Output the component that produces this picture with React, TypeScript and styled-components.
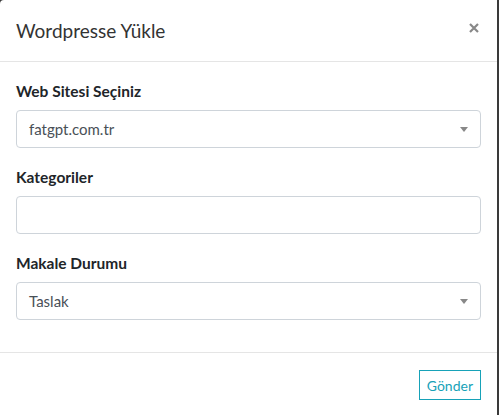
import styled, { createGlobalStyle } from 'styled-components';

const Global = createGlobalStyle`
  html, body {
    margin: 0;
    padding: 0;
    background: #3a3a3a;
    font-family: Lato, "Noto Sans", sans-serif;
  }
`;

const Page = styled.div`
  width: 499px;
  height: 415px;
  overflow: hidden;
  display: flex;
`;

const Modal = styled.div`
  width: 497px;
  height: 415px;
  background: #fff;
  border-radius: 4px 0 0 0;
  display: flex;
  flex-direction: column;
`;

const Header = styled.div`
  display: flex;
  align-items: center;
  justify-content: space-between;
  padding: 17px 16px 16px 16px;
  border-bottom: 1px solid #e5e5e5;
`;

const Title = styled.h4`
  margin: 0;
  font-size: 19px;
  line-height: 28px;
  font-weight: 400;
  color: #333;
`;

const Close = styled.button`
  border: 0;
  background: none;
  padding: 0;
  margin: 0 1px 6px 0;
  width: 12px;
  height: 12px;
  display: flex;
  align-items: center;
  justify-content: center;
  cursor: pointer;
`;

const Body = styled.div`
  padding: 17px 16px 15px;
  border-bottom: 1px solid #e5e5e5;
`;

const Group = styled.div`
  margin-bottom: 17px;
`;

const Label = styled.label`
  display: block;
  font-size: 15.5px;
  line-height: 24px;
  font-weight: 700;
  color: #212529;
  margin-bottom: 7px;
`;

const Field = styled.div`
  position: relative;
  height: 38px;
  box-sizing: border-box;
  border: 1px solid #ced4da;
  border-radius: 4px;
  display: flex;
  align-items: center;
  padding: 0 12px;
  font-size: 15px;
  color: #495057;
`;

const Caret = styled.span`
  position: absolute;
  right: 12px;
  top: 16px;
  width: 0;
  height: 0;
  border-left: 4px solid transparent;
  border-right: 4px solid transparent;
  border-top: 5px solid #888;
`;

const Footer = styled.div`
  display: flex;
  justify-content: flex-end;
  padding: 17px 16px;
`;

const SubmitButton = styled.button`
  height: 30px;
  padding: 0 7px;
  border: 1px solid #17a2b8;
  border-radius: 0;
  background: #fff;
  color: #17a2b8;
  font-family: inherit;
  font-size: 14px;
  cursor: pointer;
`;

function Select({ value }: { value: string }) {
  return (
    <Field>
      {value}
      <Caret />
    </Field>
  );
}

export default function App() {
  return (
    <Page>
      <Global />
      <Modal>
        <Header>
          <Title>Wordpresse Yükle</Title>
          <Close aria-label="Kapat">
            <svg width="10" height="10" viewBox="0 0 10 10">
              <path d="M1 1L9 9M9 1L1 9" stroke="#888" strokeWidth="2.2" />
            </svg>
          </Close>
        </Header>
        <Body>
          <Group>
            <Label>Web Sitesi Seçiniz</Label>
            <Select value="fatgpt.com.tr" />
          </Group>
          <Group>
            <Label>Kategoriler</Label>
            <Field />
          </Group>
          <Group>
            <Label>Makale Durumu</Label>
            <Select value="Taslak" />
          </Group>
        </Body>
        <Footer>
          <SubmitButton>Gönder</SubmitButton>
        </Footer>
      </Modal>
    </Page>
  );
}
